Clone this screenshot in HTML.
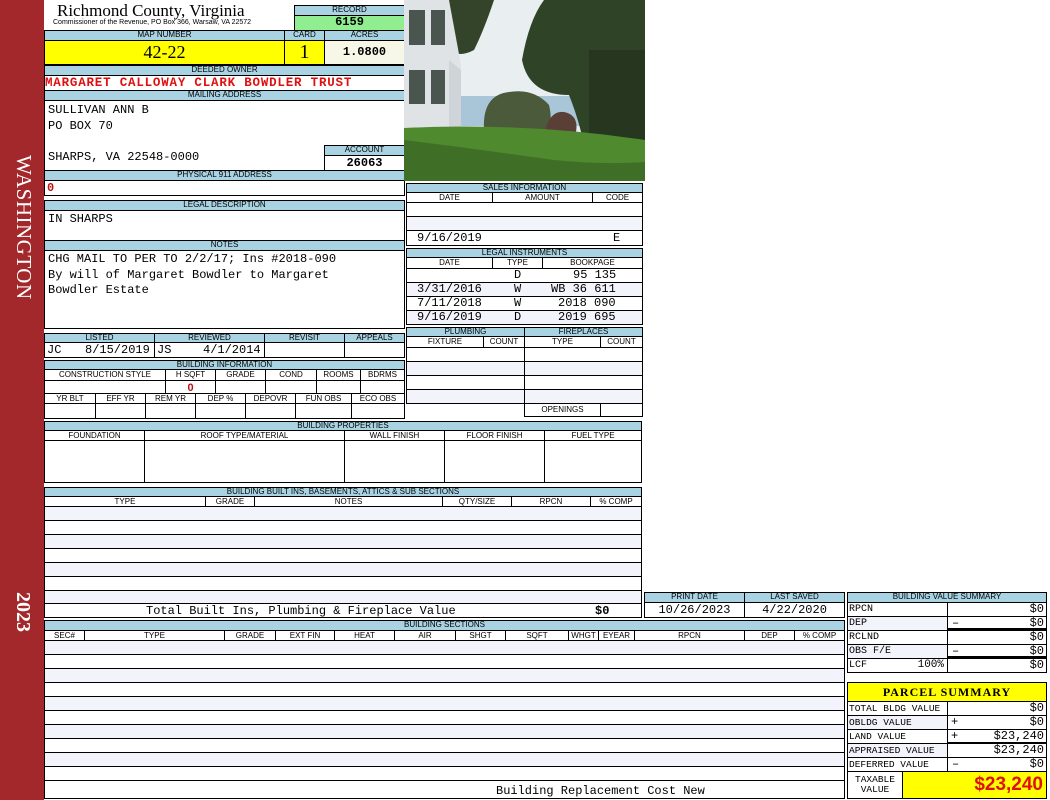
<!DOCTYPE html>
<html><head><meta charset="utf-8"><style>
*{margin:0;padding:0}
body{width:1050px;height:800px;background:#fff;position:relative;overflow:hidden;font-family:"Liberation Sans",sans-serif}
.c{position:absolute;box-sizing:border-box;border:1px solid #000;overflow:hidden;white-space:nowrap;background:#fff}
.H{background:#a9d3e2;font-size:8px;text-align:center;line-height:8px}
.L{font-size:8px;text-align:center;line-height:9px}
.m{font-family:"Liberation Mono",monospace;font-size:12px}
.lt{background:#f3f3fb}
.t{position:absolute;white-space:nowrap}
</style></head><body>
<div style="position:absolute;left:0;top:0;width:44px;height:800px;background:#a3282b"></div>
<div class="t" style="left:11px;top:155px;writing-mode:vertical-rl;color:#fff;font-family:'Liberation Serif',serif;font-size:21px;letter-spacing:0.5px">WASHINGTON</div>
<div class="t" style="left:11px;top:592px;writing-mode:vertical-rl;color:#fff;font-family:'Liberation Serif',serif;font-size:20px;font-weight:bold">2023</div>

<div class="t" style="left:57px;top:1px;font-family:'Liberation Serif',serif;font-size:17px">Richmond County, Virginia</div>
<div class="t" style="left:53px;top:19px;font-size:7px">Commissioner of the Revenue, PO Box 366, Warsaw, VA 22572</div>
<div class="c H" style="left:294px;top:5px;width:111px;height:11px">RECORD</div>
<div class="c m" style="left:294px;top:15px;width:111px;height:16px;background:#90ee90;text-align:center;line-height:13px;font-weight:bold">6159</div>

<div class="c H" style="left:44px;top:30px;width:241px;height:11px">MAP NUMBER</div>
<div class="c H" style="left:284px;top:30px;width:41px;height:11px">CARD</div>
<div class="c H" style="left:324px;top:30px;width:81px;height:11px">ACRES</div>
<div class="c" style="left:44px;top:40px;width:241px;height:25px;background:#ffff00;text-align:center;font-family:'Liberation Serif',serif;font-size:18px;line-height:22px">42-22</div>
<div class="c" style="left:284px;top:40px;width:41px;height:25px;background:#ffff00;text-align:center;font-family:'Liberation Serif',serif;font-size:20px;line-height:22px">1</div>
<div class="c m" style="left:324px;top:40px;width:81px;height:25px;background:#f7f7e8;text-align:center;line-height:22px;font-weight:bold">1.0800</div>

<div class="c H" style="left:44px;top:65px;width:361px;height:11px">DEEDED OWNER</div>
<div class="c m" style="left:44px;top:75px;width:361px;height:16px;color:#e01010;font-weight:bold;font-size:12.5px;letter-spacing:0.8px;line-height:15px">MARGARET CALLOWAY CLARK BOWDLER TRUST</div>
<div class="c H" style="left:44px;top:90px;width:361px;height:11px">MAILING ADDRESS</div>
<div class="c m" style="left:44px;top:100px;width:361px;height:71px;padding:2px 0 0 3px;line-height:15.5px">SULLIVAN ANN B<br>PO BOX 70<br><br>SHARPS, VA 22548-0000</div>
<div class="c H" style="left:324px;top:145px;width:81px;height:11px">ACCOUNT</div>
<div class="c m" style="left:324px;top:155px;width:81px;height:16px;text-align:center;font-weight:bold;line-height:14px">26063</div>
<div class="c H" style="left:44px;top:170px;width:361px;height:11px">PHYSICAL 911 ADDRESS</div>
<div class="c m" style="left:44px;top:180px;width:361px;height:16px;color:#c01010;font-weight:bold;padding-left:2px;line-height:15px">0</div>

<div class="c H" style="left:44px;top:200px;width:361px;height:11px">LEGAL DESCRIPTION</div>
<div class="c m" style="left:44px;top:210px;width:361px;height:31px;padding:1px 0 0 3px;line-height:15px">IN SHARPS</div>
<div class="c H" style="left:44px;top:240px;width:361px;height:11px">NOTES</div>
<div class="c m" style="left:44px;top:250px;width:361px;height:79px;padding:1px 0 0 3px;line-height:15.5px">CHG MAIL TO PER TO 2/2/17; Ins #2018-090<br>By will of Margaret Bowdler to Margaret<br>Bowdler Estate</div>

<!-- photo -->
<svg style="position:absolute;left:404px;top:0" width="241" height="181" viewBox="0 0 241 181">
<rect width="241" height="181" fill="#e9eef0"/>
<rect x="50" y="96" width="191" height="30" fill="#a9c6d8"/>
<path d="M40 0 H90 Q80 30 70 50 Q55 58 45 50Z" fill="#34442a"/>
<path d="M140 0 H241 V145 H180 Q175 120 165 95 Q125 95 118 60 Q125 20 140 0Z" fill="#2f4326"/>
<path d="M185 50 H241 V145 H185Z" fill="#27361f"/>
<path d="M80 130 Q78 95 105 92 Q130 88 145 105 Q150 125 140 135Z" fill="#4a5a3a"/>
<path d="M140 135 Q145 110 160 112 Q175 115 172 132Z" fill="#5a3f36"/>
<path d="M0 0 H45 L57 65 V128 H0Z" fill="#dfe3e6"/>
<path d="M45 60 L57 70 V128 H45Z" fill="#cfd4d8"/>
<rect x="5" y="10" width="16" height="35" fill="#4a5550"/><rect x="27" y="10" width="14" height="35" fill="#4a5550"/>
<rect x="5" y="70" width="16" height="34" fill="#4a5550"/><rect x="27" y="70" width="14" height="34" fill="#4a5550"/>
<path d="M0 128 Q120 122 241 140 L241 181 L0 181Z" fill="#4f8a2e"/>
<path d="M0 140 Q80 150 150 160 Q200 165 241 162 L241 181 L0 181Z" fill="#3f6f26"/>
</svg>

<!-- sales -->
<div class="c H" style="left:406px;top:183px;width:237px;height:10px">SALES INFORMATION</div>
<div class="c L" style="left:406px;top:192px;width:87px;height:11px">DATE</div>
<div class="c L" style="left:492px;top:192px;width:101px;height:11px">AMOUNT</div>
<div class="c L" style="left:592px;top:192px;width:51px;height:11px">CODE</div>
<div class="c" style="left:406px;top:202px;width:237px;height:15px"></div>
<div class="c lt" style="left:406px;top:216px;width:237px;height:15px"></div>
<div class="c m" style="left:406px;top:230px;width:237px;height:16px;line-height:15px;padding-left:10px">9/16/2019<span style="position:absolute;left:206px">E</span></div>

<div class="c H" style="left:406px;top:248px;width:237px;height:10px">LEGAL INSTRUMENTS</div>
<div class="c L" style="left:406px;top:257px;width:87px;height:12px">DATE</div>
<div class="c L" style="left:492px;top:257px;width:51px;height:12px">TYPE</div>
<div class="c L" style="left:542px;top:257px;width:101px;height:12px">BOOKPAGE</div>
<div class="c m" style="left:406px;top:268px;width:237px;height:15px;line-height:13px"><span class="t" style="left:107px">D</span><span class="t" style="left:166px">95 135</span></div>
<div class="c m lt" style="left:406px;top:282px;width:237px;height:15px;line-height:13px"><span class="t" style="left:10px">3/31/2016</span><span class="t" style="left:107px">W</span><span class="t" style="left:144px">WB 36 611</span></div>
<div class="c m" style="left:406px;top:296px;width:237px;height:15px;line-height:13px"><span class="t" style="left:10px">7/11/2018</span><span class="t" style="left:107px">W</span><span class="t" style="left:151px">2018 090</span></div>
<div class="c m lt" style="left:406px;top:310px;width:237px;height:15px;line-height:13px"><span class="t" style="left:10px">9/16/2019</span><span class="t" style="left:107px">D</span><span class="t" style="left:151px">2019 695</span></div>

<!-- plumbing / fireplaces -->
<div class="c H" style="left:406px;top:327px;width:119px;height:10px">PLUMBING</div>
<div class="c H" style="left:524px;top:327px;width:119px;height:10px">FIREPLACES</div>
<div class="c L" style="left:406px;top:336px;width:78px;height:12px">FIXTURE</div>
<div class="c L" style="left:483px;top:336px;width:42px;height:12px">COUNT</div>
<div class="c L" style="left:524px;top:336px;width:77px;height:12px">TYPE</div>
<div class="c L" style="left:600px;top:336px;width:43px;height:12px">COUNT</div>
<div class="c" style="left:406px;top:347px;width:119px;height:15px"></div><div class="c" style="left:524px;top:347px;width:119px;height:15px"></div>
<div class="c lt" style="left:406px;top:361px;width:119px;height:15px"></div><div class="c lt" style="left:524px;top:361px;width:119px;height:15px"></div>
<div class="c" style="left:406px;top:375px;width:119px;height:15px"></div><div class="c" style="left:524px;top:375px;width:119px;height:15px"></div>
<div class="c lt" style="left:406px;top:389px;width:119px;height:15px"></div><div class="c lt" style="left:524px;top:389px;width:119px;height:15px"></div>
<div class="c L" style="left:524px;top:403px;width:77px;height:14px;line-height:12px">OPENINGS</div>
<div class="c" style="left:600px;top:403px;width:43px;height:14px"></div>

<!-- listed -->
<div class="c H" style="left:44px;top:333px;width:111px;height:10px">LISTED</div>
<div class="c H" style="left:154px;top:333px;width:111px;height:10px">REVIEWED</div>
<div class="c H" style="left:264px;top:333px;width:81px;height:10px">REVISIT</div>
<div class="c H" style="left:344px;top:333px;width:61px;height:10px">APPEALS</div>
<div class="c m" style="left:44px;top:342px;width:111px;height:16px;line-height:14px;padding-left:2px">JC<span class="t" style="left:40px">8/15/2019</span></div>
<div class="c m" style="left:154px;top:342px;width:111px;height:16px;line-height:14px;padding-left:2px">JS<span class="t" style="left:48px">4/1/2014</span></div>
<div class="c" style="left:264px;top:342px;width:81px;height:16px"></div>
<div class="c" style="left:344px;top:342px;width:61px;height:16px"></div>

<!-- building info -->
<div class="c H" style="left:44px;top:360px;width:361px;height:10px">BUILDING INFORMATION</div>
<div class="c L" style="left:44px;top:369px;width:122px;height:12px">CONSTRUCTION STYLE</div>
<div class="c L" style="left:165px;top:369px;width:51px;height:12px">H SQFT</div>
<div class="c L" style="left:215px;top:369px;width:51px;height:12px">GRADE</div>
<div class="c L" style="left:265px;top:369px;width:52px;height:12px">COND</div>
<div class="c L" style="left:316px;top:369px;width:45px;height:12px">ROOMS</div>
<div class="c L" style="left:360px;top:369px;width:45px;height:12px">BDRMS</div>
<div class="c" style="left:44px;top:380px;width:122px;height:14px"></div>
<div class="c" style="left:165px;top:380px;width:51px;height:14px;text-align:center;color:#c01010;font-weight:bold;font-size:11px;line-height:14px">0</div>
<div class="c" style="left:215px;top:380px;width:51px;height:14px"></div>
<div class="c" style="left:265px;top:380px;width:52px;height:14px"></div>
<div class="c" style="left:316px;top:380px;width:45px;height:14px"></div>
<div class="c" style="left:360px;top:380px;width:45px;height:14px"></div>
<div class="c L" style="left:44px;top:393px;width:52px;height:11px">YR BLT</div>
<div class="c L" style="left:95px;top:393px;width:51px;height:11px">EFF YR</div>
<div class="c L" style="left:145px;top:393px;width:51px;height:11px">REM YR</div>
<div class="c L" style="left:195px;top:393px;width:51px;height:11px">DEP %</div>
<div class="c L" style="left:245px;top:393px;width:51px;height:11px">DEPOVR</div>
<div class="c L" style="left:295px;top:393px;width:57px;height:11px">FUN OBS</div>
<div class="c L" style="left:351px;top:393px;width:54px;height:11px">ECO OBS</div>
<div class="c" style="left:44px;top:403px;width:52px;height:16px"></div>
<div class="c" style="left:95px;top:403px;width:51px;height:16px"></div>
<div class="c" style="left:145px;top:403px;width:51px;height:16px"></div>
<div class="c" style="left:195px;top:403px;width:51px;height:16px"></div>
<div class="c" style="left:245px;top:403px;width:51px;height:16px"></div>
<div class="c" style="left:295px;top:403px;width:57px;height:16px"></div>
<div class="c" style="left:351px;top:403px;width:54px;height:16px"></div>

<!-- building properties -->
<div class="c H" style="left:44px;top:421px;width:598px;height:10px">BUILDING PROPERTIES</div>
<div class="c L" style="left:44px;top:430px;width:101px;height:11px">FOUNDATION</div>
<div class="c L" style="left:144px;top:430px;width:201px;height:11px">ROOF TYPE/MATERIAL</div>
<div class="c L" style="left:344px;top:430px;width:101px;height:11px">WALL FINISH</div>
<div class="c L" style="left:444px;top:430px;width:101px;height:11px">FLOOR FINISH</div>
<div class="c L" style="left:544px;top:430px;width:98px;height:11px">FUEL TYPE</div>
<div class="c" style="left:44px;top:440px;width:101px;height:43px"></div>
<div class="c" style="left:144px;top:440px;width:201px;height:43px"></div>
<div class="c" style="left:344px;top:440px;width:101px;height:43px"></div>
<div class="c" style="left:444px;top:440px;width:101px;height:43px"></div>
<div class="c" style="left:544px;top:440px;width:98px;height:43px"></div>

<!-- built ins -->
<div class="c H" style="left:44px;top:487px;width:598px;height:10px">BUILDING BUILT INS, BASEMENTS, ATTICS &amp; SUB SECTIONS</div>
<div class="c L" style="left:44px;top:496px;width:162px;height:11px">TYPE</div>
<div class="c L" style="left:205px;top:496px;width:50px;height:11px">GRADE</div>
<div class="c L" style="left:254px;top:496px;width:189px;height:11px">NOTES</div>
<div class="c L" style="left:442px;top:496px;width:70px;height:11px">QTY/SIZE</div>
<div class="c L" style="left:511px;top:496px;width:80px;height:11px">RPCN</div>
<div class="c L" style="left:590px;top:496px;width:52px;height:11px">% COMP</div>
<div class="c" style="left:44px;top:506px;width:598px;height:98px;background:repeating-linear-gradient(to bottom,#f3f3fb 0 13px,#000 13px 14px,#fff 14px 27px,#000 27px 28px)"></div>
<div class="c m" style="left:44px;top:603px;width:598px;height:15px;line-height:14px"><span class="t" style="left:101px">Total Built Ins, Plumbing &amp; Fireplace Value</span><span class="t" style="left:550px;font-weight:bold">$0</span></div>

<!-- print date -->
<div class="c H" style="left:644px;top:592px;width:101px;height:11px">PRINT DATE</div>
<div class="c H" style="left:744px;top:592px;width:101px;height:11px">LAST SAVED</div>
<div class="c m" style="left:644px;top:602px;width:101px;height:16px;text-align:center;line-height:14px">10/26/2023</div>
<div class="c m" style="left:744px;top:602px;width:101px;height:16px;text-align:center;line-height:14px">4/22/2020</div>

<!-- building sections -->
<div class="c H" style="left:44px;top:620px;width:801px;height:11px">BUILDING SECTIONS</div>
<div class="c L" style="left:44px;top:630px;width:41px;height:11px">SEC#</div>
<div class="c L" style="left:84px;top:630px;width:141px;height:11px">TYPE</div>
<div class="c L" style="left:224px;top:630px;width:52px;height:11px">GRADE</div>
<div class="c L" style="left:275px;top:630px;width:60px;height:11px">EXT FIN</div>
<div class="c L" style="left:334px;top:630px;width:61px;height:11px">HEAT</div>
<div class="c L" style="left:394px;top:630px;width:62px;height:11px">AIR</div>
<div class="c L" style="left:455px;top:630px;width:51px;height:11px">SHGT</div>
<div class="c L" style="left:505px;top:630px;width:64px;height:11px">SQFT</div>
<div class="c L" style="left:568px;top:630px;width:31px;height:11px">WHGT</div>
<div class="c L" style="left:598px;top:630px;width:37px;height:11px">EYEAR</div>
<div class="c L" style="left:634px;top:630px;width:111px;height:11px">RPCN</div>
<div class="c L" style="left:744px;top:630px;width:51px;height:11px">DEP</div>
<div class="c L" style="left:794px;top:630px;width:51px;height:11px">% COMP</div>
<div class="c" style="left:44px;top:640px;width:801px;height:141px;background:repeating-linear-gradient(to bottom,#f3f3fb 0 13px,#000 13px 14px,#fff 14px 27px,#000 27px 28px)"></div>
<div class="c m" style="left:44px;top:780px;width:801px;height:19px;line-height:20px"><span class="t" style="left:451px">Building Replacement Cost New</span></div>

<!-- building value summary -->
<div class="c H" style="left:847px;top:592px;width:200px;height:11px">BUILDING VALUE SUMMARY</div>
<div class="c m" style="left:847px;top:602px;width:101px;height:15px;font-size:10px;line-height:13px;padding-left:1px">RPCN</div>
<div class="c m" style="left:947px;top:602px;width:100px;height:15px;text-align:right;padding-right:2px;line-height:13px">$0</div>
<div class="c m lt" style="left:847px;top:616px;width:101px;height:15px;font-size:10px;line-height:13px;padding-left:1px">DEP</div>
<div class="c m" style="left:947px;top:616px;width:100px;height:15px;line-height:13px;border-bottom:3px solid #000"><span class="t" style="left:4px">–</span><span class="t" style="right:2px">$0</span></div>
<div class="c m" style="left:847px;top:630px;width:101px;height:15px;font-size:10px;line-height:13px;padding-left:1px">RCLND</div>
<div class="c m" style="left:947px;top:630px;width:100px;height:15px;text-align:right;padding-right:2px;line-height:13px">$0</div>
<div class="c m lt" style="left:847px;top:644px;width:101px;height:15px;font-size:10px;line-height:13px;padding-left:1px">OBS F/E</div>
<div class="c m" style="left:947px;top:644px;width:100px;height:15px;line-height:13px;border-bottom:3px solid #000"><span class="t" style="left:4px">–</span><span class="t" style="right:2px">$0</span></div>
<div class="c m" style="left:847px;top:658px;width:101px;height:15px;font-size:10px;line-height:13px;padding-left:1px">LCF<span class="t" style="right:3px;font-size:11px">100%</span></div>
<div class="c m" style="left:947px;top:658px;width:100px;height:15px;text-align:right;padding-right:2px;line-height:13px">$0</div>

<!-- parcel summary -->
<div class="c m" style="left:847px;top:682px;width:200px;height:20px;background:#ffff00;text-align:center;font-weight:bold;font-size:12px;line-height:18px;font-family:'Liberation Serif',serif;letter-spacing:1px">PARCEL SUMMARY</div>
<div class="c m" style="left:847px;top:701px;width:101px;height:15px;font-size:9.5px;line-height:13px;padding-left:1px">TOTAL BLDG VALUE</div>
<div class="c m" style="left:947px;top:701px;width:100px;height:15px;text-align:right;padding-right:2px;line-height:13px">$0</div>
<div class="c m lt" style="left:847px;top:715px;width:101px;height:15px;font-size:9.5px;line-height:13px;padding-left:1px">OBLDG VALUE</div>
<div class="c m" style="left:947px;top:715px;width:100px;height:15px;line-height:13px"><span class="t" style="left:3px">+</span><span class="t" style="right:2px">$0</span></div>
<div class="c m" style="left:847px;top:729px;width:101px;height:15px;font-size:9.5px;line-height:13px;padding-left:1px">LAND VALUE</div>
<div class="c m" style="left:947px;top:729px;width:100px;height:15px;line-height:13px;border-bottom:2px solid #000"><span class="t" style="left:3px">+</span><span class="t" style="right:2px">$23,240</span></div>
<div class="c m lt" style="left:847px;top:743px;width:101px;height:15px;font-size:9.5px;line-height:13px;padding-left:1px">APPRAISED VALUE</div>
<div class="c m" style="left:947px;top:743px;width:100px;height:15px;text-align:right;padding-right:2px;line-height:13px">$23,240</div>
<div class="c m" style="left:847px;top:757px;width:101px;height:15px;font-size:9.5px;line-height:13px;padding-left:1px">DEFERRED VALUE</div>
<div class="c m" style="left:947px;top:757px;width:100px;height:15px;line-height:13px"><span class="t" style="left:4px">–</span><span class="t" style="right:2px">$0</span></div>
<div class="c m" style="left:847px;top:771px;width:56px;height:28px;font-size:9.5px;line-height:10px;text-align:center;padding-top:3px">TAXABLE<br>VALUE</div>
<div class="c" style="left:902px;top:771px;width:145px;height:28px;background:#ffff00;text-align:right;padding-right:3px;color:#e01010;font-weight:bold;font-size:19px;line-height:26px">$23,240</div>
</body></html>
